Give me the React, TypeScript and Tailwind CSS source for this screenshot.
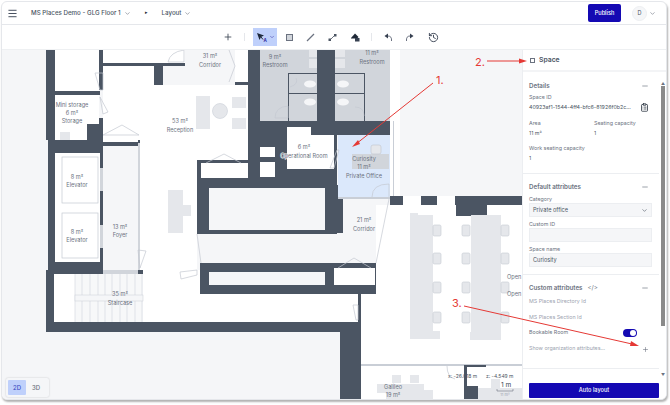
import React from "react";
import { Menu, ChevronDown, Plus, Minus, History, ClipboardList } from "lucide-react";

const DARK = "#4b5563";
type R = [number, number, number, number, string?];

const rects: R[] = [
  // exterior dark masses
  [46, 50, 9, 90, DARK],
  [48, 140, 7, 135, DARK],
  [46, 270, 8, 62, DARK],
  [46, 322, 315, 10, DARK],
  [340, 322, 21, 78, DARK],
  // storage
  [55, 50, 44, 41, "#ffffff"],
  [55, 95, 44, 45, "#ffffff"],
  [55, 91, 45, 4, DARK],
  [99, 50, 4, 40, DARK],
  [87, 124, 13, 16, DARK],
  [99, 118, 4, 27, DARK],
  [60, 132, 10, 8, "#e5e7eb"],
  // reception interior
  [103, 66, 145, 94, "#ffffff"],
  [140, 143, 57, 130, "#ffffff"],
  [103, 50, 82, 13, "#ffffff"],
  [103, 63, 82, 3, DARK],
  [163, 66, 72, 19, "#f5f6f8"],
  [185, 50, 50, 20, "#f5f6f8"],
  [154, 63, 9, 22, DARK],
  [235, 50, 13, 32, "#ffffff"],
  [235, 82, 13, 3, DARK],
  // restroom block
  [248, 50, 12, 110, DARK],
  [260, 50, 57, 71, "#d1d5db"],
  [317, 50, 18, 76, DARK],
  [335, 50, 55, 71, "#d1d5db"],
  [248, 121, 152, 14, DARK],
  [287, 127, 24, 8, "#ffffff"],
  [390, 50, 10, 71, "#ffffff"],
  [309, 50, 8, 7, "#e5e7eb"],
  [309, 59, 8, 9, "#e5e7eb"],
  [335, 50, 10, 7, "#e5e7eb"],
  [335, 59, 10, 9, "#e5e7eb"],
  [288, 73, 29, 1, DARK],
  [288, 93, 29, 1, DARK],
  [288, 73, 1, 48, DARK],
  [335, 73, 30, 1, DARK],
  [335, 93, 30, 1, DARK],
  [364, 73, 1, 48, DARK],
  // elevators
  [48, 140, 92, 13, DARK],
  [103, 135, 35, 7, "#ffffff"],
  [55, 153, 45, 109, "#ffffff"],
  [100, 143, 3, 25, DARK],
  [100, 168, 3, 23, "#d1d5db"],
  [100, 191, 3, 34, DARK],
  [100, 225, 3, 23, "#d1d5db"],
  [100, 248, 3, 26, DARK],
  [55, 262, 48, 12, DARK],
  [103, 146, 35, 124, "#f5f6f8"],
  [138, 143, 2, 127, "#d1d5db"],
  // staircase
  [54, 274, 89, 48, "#ffffff"],
  [103, 270, 35, 4, "#d1d5db"],
  [75, 274, 68, 48, "#f7f8f9"],
  [143, 274, 60, 48, "#ffffff"],
  [138, 270, 42, 4, DARK],
  [148, 319, 12, 4, DARK],
  // central block
  [197, 160, 63, 74, DARK],
  [260, 135, 77, 99, DARK],
  [201, 163, 47, 15, "#ffffff"],
  [209, 188, 116, 42, "#f5f6f8"],
  [260, 147, 15, 10, "#ffffff"],
  [260, 162, 15, 15, "#ffffff"],
  [287, 135, 47, 34, "#ffffff"],
  [325, 185, 18, 48, DARK],
  // curiosity
  [338, 135, 52, 62, "#dbe8fb"],
  [338, 197, 52, 2, "#c9ced6"],
  [352, 154, 37, 15, "#d1d5db"],
  // corridors
  [197, 234, 146, 29, "#f5f6f8"],
  [343, 199, 47, 35, "#f5f6f8"],
  [343, 234, 33, 29, "#f5f6f8"],
  // lower dark block
  [200, 263, 178, 31, DARK],
  [209, 272, 116, 13, "#f5f6f8"],
  [334, 268, 41, 17, "#ffffff"],
  [358, 294, 3, 28, DARK],
  [200, 294, 158, 28, "#ffffff"],
  [143, 270, 57, 52, "#ffffff"],
  // right open area
  [390, 121, 10, 76, "#ffffff"],
  [393, 121, 1, 76, "#c9ced6"],
  [401, 135, 121, 61, "#f5f6f8"],
  [376, 205, 146, 160, "#ffffff"],
  [390, 196, 132, 9, "#ffffff"],
  [390, 196, 13, 9, DARK],
  [421, 196, 16, 9, DARK],
  [455, 196, 67, 9, DARK],
  [456, 205, 31, 11, DARK],
  [361, 294, 161, 71, "#ffffff"],
  [361, 364, 161, 2, "#c9ced6"],
  [361, 366, 161, 34, "#ffffff"],
  [464, 365, 14, 35, DARK],
  [478, 365, 8, 2, DARK],
  [467, 367, 11, 19, "#ffffff"],
  [478, 388, 44, 12, "#e5e7eb"],
  // desks
  [410, 213, 8, 118, "#e5e7eb"],
  [418, 215, 15, 116, "#e5e7eb"],
  [410, 331, 30, 8, "#e5e7eb"],
  [471, 215, 30, 117, "#e5e7eb"],
  [470, 332, 31, 8, "#e5e7eb"],
  // reception furniture
  [196, 96, 14, 33, "#e5e7eb"],
  [232, 97, 14, 11, "#e5e7eb"],
  [232, 118, 14, 11, "#e5e7eb"],
  [168, 190, 15, 43, "#e5e7eb"],
  [183, 205, 8, 11, "#e5e7eb"],
  // galileo
  [392, 375, 9, 8, "#e5e7eb"],
  [410, 375, 9, 8, "#e5e7eb"],
  [377, 384, 9, 9, "#e5e7eb"],
  [386, 384, 38, 16, "#e5e7eb"],
  [424, 390, 9, 9, "#e5e7eb"],
  [491, 379, 9, 9, "#e5e7eb"],
];

const chairs: [number, number][] = [
  [433, 225], [433, 253], [433, 282], [433, 312],
  [462, 225], [462, 253], [462, 282], [462, 312],
  [501, 225], [501, 253], [501, 282], [501, 312],
];

const labels: [number, number, string][] = [
  [210, 58, "31 m²"], [210, 67, "Corridor"],
  [275, 59, "9 m²"], [275, 67, "Restroom"],
  [372, 55, "11 m²"], [372, 64, "Restroom"],
  [72, 107, "Mini storage"], [72, 115, "6 m²"], [72, 123, "Storage"],
  [180, 123, "53 m²"], [180, 132, "Reception"],
  [77, 179, "8 m²"], [77, 187, "Elevator"],
  [77, 234, "8 m²"], [77, 242, "Elevator"],
  [120, 229, "13 m²"], [120, 237, "Foyer"],
  [120, 296, "35 m²"], [120, 305, "Staircase"],
  [304, 149, "6 m²"],
  [364, 161, "Curiosity"], [364, 169, "11 m²"], [364, 178, "Private Office"],
  [364, 222, "21 m²"], [364, 231, "Corridor"],
  [393, 389, "Galileo"], [393, 397, "19 m²"],
];

function FloorPlan() {
  return (
    <svg viewBox="2 50 520 349" className="block w-[520px] h-[349px]">
      {rects.map(([x, y, w, h, f], i) => (
        <rect key={i} x={x} y={y} width={w} height={h} fill={f} />
      ))}
      {[75, 82, 90, 98, 105, 112, 120, 127, 135, 142].map((x) => (
        <line key={x} x1={x} y1={274} x2={x} y2={322} stroke="#d1d5db" strokeWidth={0.6} />
      ))}
      <rect x={75} y={295} width={68} height={6} fill="#f5f6f8" stroke="#c9ced6" strokeWidth={0.5} />
      <g fill="none" stroke="#c4c9d1" strokeWidth={0.7}>
        <path d="M168 62 H184 V50 M168 62 Q170 52 184 50" />
        <path d="M229 50 L235 66 L229 82" />
        <path d="M95 73 L103 73 L103 90 L100 90 Z" />
        <path d="M100 97 L108 112 L103 114 Z" />
        <path d="M103 135 L122 125 L139 135 Z" />
        <path d="M206 163 L224 154 L241 163" />
        <path d="M275 118 Q275 107 288 106 V118 Z" />
        <path d="M290 87 Q299 84 296 78" />
        <path d="M364 116 Q364 107 355 107" />
        <path d="M138 250 L146 251 L140 268 Z" />
        <path d="M180 272 L197 270 L197 275 L181 279 Z" />
        <path d="M337 150 L330 168 L334 168 L339 150 Z" />
        <path d="M372 197 Q372 184 389 184 V197" />
        <path d="M338 268 L354 258 L371 268" />
        <path d="M353 305 L358 305 L358 320 L356 320 Z" />
        <path d="M447 366 Q447 377 455 379" />
        <path d="M197 234 L201 263" />
        <path d="M389 199 L376 263" />
        <rect x={62} y={157} width={36} height={46} fill="#fff" />
        <rect x={62} y={213} width={36} height={45} fill="#fff" />
      </g>
      <ellipse cx={310} cy={84} rx={6} ry={3.5} fill="#f5f6f8" />
      <ellipse cx={310} cy={102} rx={6} ry={3.5} fill="#f5f6f8" />
      <ellipse cx={343} cy={84} rx={6} ry={3.5} fill="#f5f6f8" />
      <ellipse cx={343} cy={102} rx={6} ry={3.5} fill="#f5f6f8" />
      <circle cx={220} cy={111} r={7.5} fill="#e5e7eb" stroke="#c9ced6" strokeWidth={0.6} />
      <rect x={371} y={145} width={10} height={9} rx={2} fill="#e5e7eb" stroke="#c4c9d1" strokeWidth={0.7} />
      {chairs.map(([x, y], i) => (
        <rect key={i} x={x} y={y} width={8} height={11} rx={1.5} fill="#e5e7eb" stroke="#c4c9d1" strokeWidth={0.6} />
      ))}
      {labels.map(([x, y, t], i) => (
        <text key={i} x={x} y={y} textAnchor="middle" fontSize={5.6} fill="#6b7280">
          {t}
        </text>
      ))}
      <text x={304} y={158} textAnchor="middle" fontSize={5.6} fill="#6b7280" stroke="#ffffff" strokeWidth={1} paintOrder="stroke">
        Operational Room
      </text>
      <text x={507} y={279} fontSize={5.6} fill="#6b7280">Open</text>
      <text x={507} y={296} fontSize={5.6} fill="#6b7280">Open</text>
      <text x={448} y={378} fontSize={5} fill="#4b5563">x: -26.018 m</text>
      <text x={486} y={378} fontSize={5} fill="#4b5563">z: -4.549 m</text>
      <text x={501} y={387} fontSize={6.5} fill="#374151">1 m</text>
      <path d="M497 389 V391 H513 V389" fill="none" stroke="#6b7280" strokeWidth={0.6} />
      <text x={505} y={396} textAnchor="middle" fontSize={4} fill="#9ca3af">11 m²</text>
    </svg>
  );
}

function Arrows() {
  return (
    <svg viewBox="0 0 670 405" className="absolute inset-0 w-[670px] h-[405px] pointer-events-none">
      <g stroke="#e53935" strokeWidth={1} fill="#e53935">
        <line x1={433} y1={83} x2={356} y2={144} />
        <path d="M352 147 L358 140 L360 144 Z" stroke="none" />
        <line x1={487} y1={61} x2={522} y2={61} />
        <path d="M527 61 L519 58.5 L519 63.5 Z" stroke="none" />
        <line x1={464} y1={306} x2={632} y2={344} />
        <path d="M639 346 L631 341 L630 346 Z" stroke="none" />
      </g>
      <g fill="#e53935" fontSize={11}>
        <text x={436} y={84}>1.</text>
        <text x={475} y={66}>2.</text>
        <text x={452} y={307}>3.</text>
      </g>
    </svg>
  );
}

function SelectIcon() {
  return (
    <svg width="12" height="11" viewBox="0 0 12 11">
      <path d="M1 1 L8 3.5 L5 5 L3.5 8 Z" fill="#1e293b" />
      <path d="M5 5 L7 7.5" stroke="#1e293b" strokeWidth="1" />
      <text x="7.5" y="10" fontSize="4.5" fontWeight="700" fill="#3730a3">A</text>
    </svg>
  );
}

function Turn({ flip }: { flip?: boolean }) {
  return (
    <svg width="9" height="9" viewBox="0 0 9 9" className={flip ? "-scale-x-100" : ""}>
      <path d="M0.5 3 L4 0.5 V5.5 Z" fill="#374151" />
      <path d="M4 3 Q8 3 7.5 8" fill="none" stroke="#6b7280" strokeWidth="1" />
    </svg>
  );
}

function Section({ title, extra, children, first }: { title: string; extra?: React.ReactNode; children: React.ReactNode; first?: boolean }) {
  return (
    <section className={first ? "pl-[6px] pr-[17px] pt-[9px]" : "pl-[6px] pr-[17px] pt-[8px]"}>
      <div className="flex items-center h-[9px] mb-[3px]">
        <span className="text-[6.2px] font-semibold text-[#6b7280]">{title}</span>
        {extra}
        <Minus size={8} className="ml-auto text-[#6b7280]" />
      </div>
      {children}
    </section>
  );
}

function Label({ children }: { children: React.ReactNode }) {
  return <div className="h-[8px] text-[5.3px] leading-[8px] text-[#6b7280] whitespace-nowrap">{children}</div>;
}

function Value({ children }: { children: React.ReactNode }) {
  return <div className="mt-px h-[11px] text-[5.3px] leading-[11px] text-[#4b5563]">{children}</div>;
}

function Box({ children }: { children?: React.ReactNode }) {
  return (
    <div className="h-[14px] w-[123px] mb-[3px] bg-[#f5f6f8] border border-[#eceef1] flex items-center px-[3px] text-[5.6px] text-[#4b5563]">
      {children}
    </div>
  );
}

export default function App() {
  return (
    <div className="relative w-[670px] h-[405px] bg-white overflow-hidden font-['Inter',sans-serif]">
      <div className="ml-px mt-px w-[666px] h-[399px] rounded-md bg-white border border-[#e5e7eb] shadow-[1px_2px_2px_rgba(0,0,0,0.3)] flex flex-col overflow-hidden">
        {/* top bar */}
        <header className="h-[23px] shrink-0 flex items-center border-b border-[#e5e7eb] pl-[5px]">
          <Menu size={11} className="text-[#374151]" />
          <span className="ml-[13px] text-[6.2px] font-medium text-[#4b5563]">MS Places Demo - GLG Floor 1</span>
          <ChevronDown size={7} className="ml-[3px] text-[#6b7280]" />
          <span className="ml-[14px] text-[5px] text-[#1f2937]">▸</span>
          <span className="ml-[14px] text-[6.2px] font-medium text-[#4b5563]">Layout</span>
          <ChevronDown size={7} className="ml-[3px] text-[#6b7280]" />
          <button className="ml-auto w-[33px] h-[18px] bg-[#1409b3] rounded-[2px] text-white text-[5.6px] font-medium">Publish</button>
          <div className="ml-[11px] w-[15px] h-[15px] rounded-full bg-[#f5f6f8] border border-[#eceef1] flex items-center justify-center text-[5.5px] text-[#4b5563]">D</div>
          <ChevronDown size={7} className="ml-[2px] mr-[10px] text-[#6b7280]" />
        </header>
        {/* toolbar */}
        <div className="h-[25px] shrink-0 flex items-center border-b border-[#eef0f2] pl-[221px] text-[#374151]">
          <Plus size={10} strokeWidth={2} />
          <div className="ml-[11px] w-px h-[8px] bg-[#e5e7eb]" />
          <div className="ml-[8px] w-[24px] h-[18px] bg-[#bfd0fb] flex items-center justify-center gap-[1px]">
            <SelectIcon />
            <ChevronDown size={6} className="text-[#3730a3]" />
          </div>
          <div className="ml-[9px] w-[7px] h-[7px] bg-[#d1d5db] border border-[#6b7280]" />
          <svg width="9" height="9" viewBox="0 0 9 9" className="ml-[13px]">
            <path d="M1 8 L8 1" stroke="#6b7280" strokeWidth="1.2" />
          </svg>
          <svg width="9" height="9" viewBox="0 0 9 9" className="ml-[13px]">
            <path d="M2 7 L7 2" stroke="#6b7280" strokeWidth="1" />
            <rect x="0.5" y="5.5" width="2.5" height="2.5" fill="#4b5563" />
            <rect x="6" y="1" width="2.5" height="2.5" fill="#4b5563" />
          </svg>
          <svg width="10" height="10" viewBox="0 0 10 10" className="ml-[13px]">
            <path d="M1 6 L5 1.5 L8.5 5 L7 6.5 H1 Z" fill="#1f2937" />
            <rect x="5" y="6" width="4.5" height="3.5" fill="#374151" />
          </svg>
          <div className="ml-[11px] w-px h-[8px] bg-[#e5e7eb]" />
          <div className="ml-[12px]"><Turn /></div>
          <div className="ml-[12px]"><Turn flip /></div>
          <History size={11} className="ml-[14px]" />
        </div>
        {/* body */}
        <div className="flex-1 flex min-h-0">
          <main className="relative w-[520px] bg-[#f5f6f8]">
            <FloorPlan />
            <div className="absolute left-[4px] bottom-[2px] h-[19px] w-[43px] bg-[#f5f6f8] rounded-[2px] shadow-[0_0_2px_rgba(0,0,0,0.2)] p-[2px] flex text-[6px] font-medium">
              <span className="w-[18px] bg-[#bfd0fb] text-[#3b4fc4] rounded-[1px] flex items-center justify-center">2D</span>
              <span className="w-[20px] text-[#6b7280] flex items-center justify-center">3D</span>
            </div>
          </main>
          <aside className="relative w-[144px] shrink-0 flex flex-col border-l border-[#eceef1] bg-white">
            <div className="h-[22px] shrink-0 flex items-center pl-[7px] border-b-2 border-[#f3f4f6]">
              <span className="w-[5px] h-[5px] border border-dashed border-[#6b7280]" />
              <span className="ml-[4px] text-[6.8px] font-semibold text-[#4b5563]">Space</span>
            </div>
            <div className="flex-1 min-h-0">
              <Section title="Details" first>
                <Label>Space ID</Label>
                <div className="mt-px flex items-center h-[11px] text-[5.3px] text-[#4b5563] whitespace-nowrap">
                  <span>40923af1-1544-4ff4-bfc6-81926f0b2c...</span>
                  <ClipboardList size={9} className="ml-auto text-[#1f2937]" />
                </div>
                <div className="grid grid-cols-2 mt-[6px] w-[130px]">
                  <div>
                    <Label>Area</Label>
                    <Value>11 m²</Value>
                  </div>
                  <div>
                    <Label>Seating capacity</Label>
                    <Value>1</Value>
                  </div>
                </div>
                <div className="mt-[5px] pb-[9px]">
                  <Label>Work seating capacity</Label>
                  <Value>1</Value>
                </div>
              </Section>
              <div className="mr-[7px] h-px bg-[#eceef1]" />
              <Section title="Default attributes">
                <div className="h-px" />
                <Label>Category</Label>
                <Box>
                  <span>Private office</span>
                  <ChevronDown size={7} className="ml-auto" />
                </Box>
                <Label>Custom ID</Label>
                <Box />
                <Label>Space name</Label>
                <Box>Curiosity</Box>
                <div className="h-[4px]" />
              </Section>
              <div className="mr-[7px] h-px bg-[#eceef1]" />
              <Section
                title="Custom attributes"
                extra={<span className="ml-[5px] text-[6.2px] text-[#6b7280]">&lt;/&gt;</span>}
              >
                <div className="text-[5.3px] leading-[8px] text-[#9ca3af] mt-[5px]">MS Places Directory Id</div>
                <div className="text-[5.3px] leading-[8px] text-[#9ca3af] mt-[8px]">MS Places Section Id</div>
                <div className="flex items-center h-[10px] mt-[7px] text-[5.3px] text-[#6b7280]">
                  <span>Bookable Room</span>
                  <span className="ml-auto mr-[12px] w-[14px] h-[8px] rounded-full bg-[#1409b3] flex items-center justify-end pr-[1px]">
                    <span className="w-[6px] h-[6px] rounded-full bg-white" />
                  </span>
                </div>
                <div className="flex items-center h-[10px] mt-[6px] text-[5.3px] text-[#9ca3af]">
                  <span>Show organization attributes...</span>
                  <Plus size={7} className="ml-auto text-[#6b7280]" />
                </div>
              </Section>
            </div>
            <div className="h-[31px] shrink-0 mr-[7px] border-t border-[#eceef1]" />
            <div className="absolute left-[6px] bottom-[1px] w-[130px] h-[15px] bg-[#1409b3] rounded-[1px] text-white text-[5.6px] font-medium flex items-center justify-center">
              Auto layout
            </div>
            {/* scrollbar */}
            <div className="absolute left-[138px] top-[31px] bottom-[22px] w-[4px] flex flex-col items-center">
              <span className="text-[4px] text-[#6b7280] leading-[5px]">▲</span>
              <span className="w-[4px] h-[240px] shrink-0 bg-[#8a8a8a]" />
              <span className="mt-auto text-[4px] text-[#6b7280] leading-[5px]">▼</span>
            </div>
          </aside>
        </div>
      </div>
      <Arrows />
    </div>
  );
}
